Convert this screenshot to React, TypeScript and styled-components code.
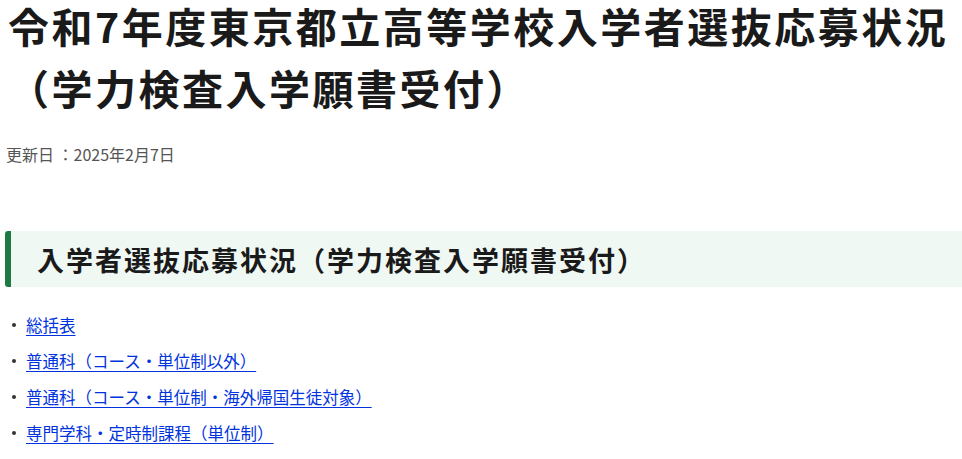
import React from 'react';
import styled, { createGlobalStyle } from 'styled-components';

const GlobalStyle = createGlobalStyle`
  body {
    margin: 0;
    background: #fff;
    font-family: "Noto Sans CJK JP", "Noto Sans", sans-serif;
    color: #1a1a1a;
  }
`;

const Page = styled.main`
  padding: 0 0 0 5px;
`;

const Title = styled.h1`
  margin: -6px 0 0 0;
  padding: 0 0 0 3px;
  font-size: 41px;
  font-weight: 700;
  line-height: 62px;
  letter-spacing: 2.5px;
  color: #1a1a1a;
`;

const Updated = styled.p`
  margin: 25px 0 0 1px;
  font-size: 16px;
  line-height: 22px;
  color: #555;
`;

const Section = styled.h2`
  margin: 66px 0 0 0;
  height: 56px;
  display: flex;
  align-items: center;
  padding-left: 26px;
  background: #f0f8f4;
  border-left: 6px solid #1c7a42;
  border-radius: 3px 0 0 3px;
  font-size: 27px;
  font-weight: 700;
  letter-spacing: 2px;
  color: #1a1a1a;
`;

const List = styled.ul`
  list-style: none;
  margin: 20px 0 0 0;
  padding: 0;
`;

const Item = styled.li`
  display: flex;
  align-items: center;
  height: 36px;
  font-size: 16.5px;
  &::before {
    content: "";
    width: 4px;
    height: 4px;
    border-radius: 50%;
    background: #333;
    margin: 0 10px 0 7px;
  }
`;

const Link = styled.a`
  color: #0033dd;
  text-decoration: underline;
  text-underline-offset: 3px;
`;

const links = [
  '総括表',
  '普通科（コース・単位制以外）',
  '普通科（コース・単位制・海外帰国生徒対象）',
  '専門学科・定時制課程（単位制）',
];

export default function App() {
  return (
    <>
      <GlobalStyle />
      <Page>
        <Title>令和7年度東京都立高等学校入学者選抜応募状況（学力検査入学願書受付）</Title>
        <Updated>更新日 ：2025年2月7日</Updated>
        <Section>入学者選抜応募状況（学力検査入学願書受付）</Section>
        <List>
          {links.map((l) => (
            <Item key={l}>
              <Link href="#">{l}</Link>
            </Item>
          ))}
        </List>
      </Page>
    </>
  );
}
